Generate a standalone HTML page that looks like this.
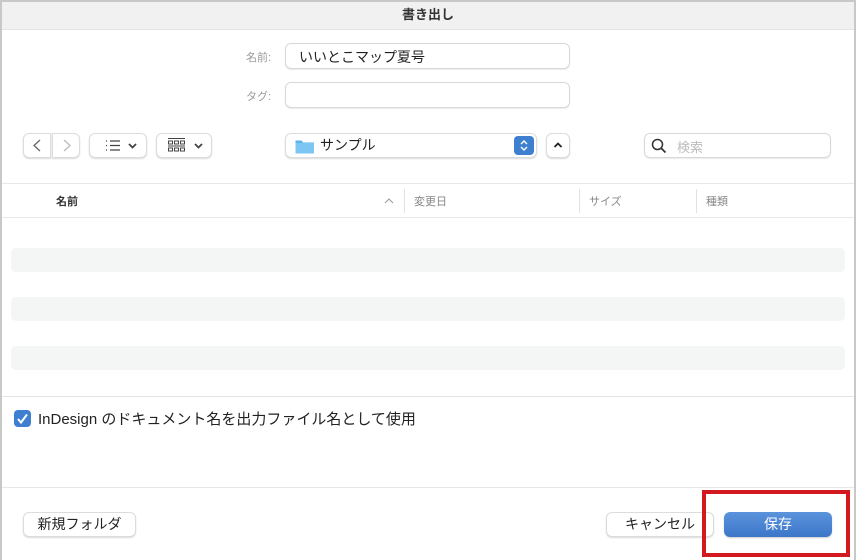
<!DOCTYPE html>
<html><head><meta charset="utf-8"><style>
*{box-sizing:border-box;margin:0;padding:0}
body{width:856px;height:560px;background:#fff;font-family:"Liberation Sans","Noto Sans CJK JP",sans-serif;position:relative;overflow:hidden}
.a{position:absolute}
.frame{left:0;top:0;width:856px;height:560px;border:2px solid #c8c8c8;border-bottom:none}
.title{left:2px;top:2px;width:852px;height:28px;background:#f1f1f1;border-bottom:1px solid #e4e4e4;text-align:center;font-size:13px;font-weight:bold;color:#333;line-height:26px}
.lbl{font-size:11px;color:#9a9a9a}
.field{border:1px solid #d8d8d8;border-radius:6px;box-shadow:0 1px 1px rgba(0,0,0,.08);background:#fff}
.btn{border:1px solid #dcdcdc;border-radius:6px;box-shadow:0 1px 1.5px rgba(0,0,0,.15);background:#fff}
.row{left:11px;width:834px;height:24px;background:#f4f5f5;border-radius:5px}
.hd{font-size:11px;color:#888;top:193px}
</style></head><body>
<div class="a frame"></div>
<div class="a title">書き出し</div>
<div class="a lbl" style="left:246px;top:49px">名前:</div>
<div class="a field" style="left:285px;top:43px;width:285px;height:26px;font-size:14px;color:#222;padding:3px 0 0 13px">いいとこマップ夏号</div>
<div class="a lbl" style="left:246px;top:88px">タグ:</div>
<div class="a field" style="left:285px;top:82px;width:285px;height:26px"></div>

<div class="a btn" style="left:23px;top:133px;width:28px;height:25px;border-radius:6px 0 0 6px"></div>
<div class="a btn" style="left:52px;top:133px;width:28px;height:25px;border-radius:0 6px 6px 0"></div>
<svg class="a" style="left:23px;top:133px" width="58" height="25"><path d="M17 7l-6 5.5 6 5.5" stroke="#666" fill="none" stroke-width="1.3"/><path d="M41 7l6 5.5-6 5.5" stroke="#bbb" fill="none" stroke-width="1.3"/></svg>
<div class="a btn" style="left:89px;top:133px;width:58px;height:25px"></div>
<svg class="a" style="left:89px;top:133px" width="58" height="25"><g stroke="#444" stroke-width="1.2"><path d="M17 8h1M17 12.5h1M17 17h1M21 8h10M21 12.5h10M21 17h10"/><path d="M40 11l3.5 3.5 3.5-3.5" fill="none" stroke-width="1.8"/></g></svg>
<div class="a btn" style="left:156px;top:133px;width:56px;height:25px"></div>
<svg class="a" style="left:156px;top:133px" width="56" height="25"><g stroke="#444" stroke-width="1" fill="none"><path d="M12 5.5h17"/><rect x="12.5" y="8" width="4" height="3"/><rect x="18.5" y="8" width="4" height="3"/><rect x="24.5" y="8" width="4" height="3"/><path d="M12 13h17"/><rect x="12.5" y="15" width="4" height="3"/><rect x="18.5" y="15" width="4" height="3"/><rect x="24.5" y="15" width="4" height="3"/><path d="M39 11l3.5 3.5 3.5-3.5" stroke-width="1.8"/></g></svg>

<div class="a btn" style="left:285px;top:133px;width:252px;height:25px"></div>
<svg class="a" style="left:295px;top:138px" width="20" height="16"><path d="M0.5 2.5h6l1.5 2h11v10.5h-18.5z" fill="#5ab4ec"/><path d="M0.5 5h18.5v10.5h-18.5z" fill="#7cc6f3"/></svg>
<div class="a" style="left:320px;top:135px;font-size:14px;color:#222">サンプル</div>
<div class="a" style="left:514px;top:136px;width:20px;height:19px;background:#3f7fd0;border-radius:4px"></div>
<svg class="a" style="left:514px;top:136px" width="20" height="19"><path d="M7 8l3-3 3 3M7 11l3 3 3-3" stroke="#fff" fill="none" stroke-width="1.4"/></svg>
<div class="a btn" style="left:546px;top:133px;width:24px;height:25px"></div>
<svg class="a" style="left:546px;top:133px" width="24" height="25"><path d="M8.5 14l3.5-3.5 3.5 3.5" stroke="#222" fill="none" stroke-width="1.8"/></svg>

<div class="a field" style="left:644px;top:133px;width:187px;height:25px"></div>
<svg class="a" style="left:650px;top:137px" width="18" height="18"><circle cx="7.5" cy="7.5" r="5" stroke="#333" stroke-width="1.5" fill="none"/><path d="M11 11l4.5 4.5" stroke="#333" stroke-width="1.8"/></svg>
<div class="a" style="left:677px;top:137px;font-size:13px;color:#bcbcbc">検索</div>

<div class="a" style="left:2px;top:183px;width:852px;height:1px;background:#e8e8e8"></div>
<div class="a" style="left:2px;top:217px;width:852px;height:1px;background:#e8e8e8"></div>
<div class="a" style="left:56px;top:193px;font-size:11px;color:#333;font-weight:bold">名前</div>
<svg class="a" style="left:384px;top:197px" width="10" height="8"><path d="M1 6l4-4 4 4" stroke="#999" fill="none"/></svg>
<div class="a" style="left:404px;top:189px;width:1px;height:24px;background:#e2e2e2"></div>
<div class="a hd" style="left:414px">変更日</div>
<div class="a" style="left:579px;top:189px;width:1px;height:24px;background:#e2e2e2"></div>
<div class="a hd" style="left:589px">サイズ</div>
<div class="a" style="left:696px;top:189px;width:1px;height:24px;background:#e2e2e2"></div>
<div class="a hd" style="left:706px">種類</div>

<div class="a row" style="top:248px"></div>
<div class="a row" style="top:297px"></div>
<div class="a row" style="top:346px"></div>
<div class="a" style="left:2px;top:396px;width:852px;height:1px;background:#e4e4e4"></div>

<div class="a" style="left:14px;top:410px;width:17px;height:17px;background:#3f7fd0;border-radius:4px"></div>
<svg class="a" style="left:14px;top:410px" width="17" height="17"><path d="M4 9l3 3.5 6-8" stroke="#fff" fill="none" stroke-width="2"/></svg>
<div class="a" style="left:38px;top:408px;font-size:15px;color:#222">InDesign のドキュメント名を出力ファイル名として使用</div>

<div class="a" style="left:2px;top:487px;width:852px;height:1px;background:#e6e6e6"></div>
<div class="a btn" style="left:23px;top:512px;width:113px;height:25px;font-size:14px;color:#222;text-align:center;line-height:23px">新規フォルダ</div>
<div class="a btn" style="left:606px;top:512px;width:108px;height:25px;font-size:14px;color:#222;text-align:center;line-height:23px">キャンセル</div>
<div class="a" style="left:724px;top:512px;width:108px;height:25px;border-radius:6px;background:linear-gradient(#5b93dc,#3c76c8);font-size:14px;color:#fff;text-align:center;line-height:25px;box-shadow:0 1px 1.5px rgba(0,0,0,.2)">保存</div>
<div class="a" style="left:702px;top:490px;width:148px;height:67px;border:4px solid #d2191f"></div>
</body></html>
